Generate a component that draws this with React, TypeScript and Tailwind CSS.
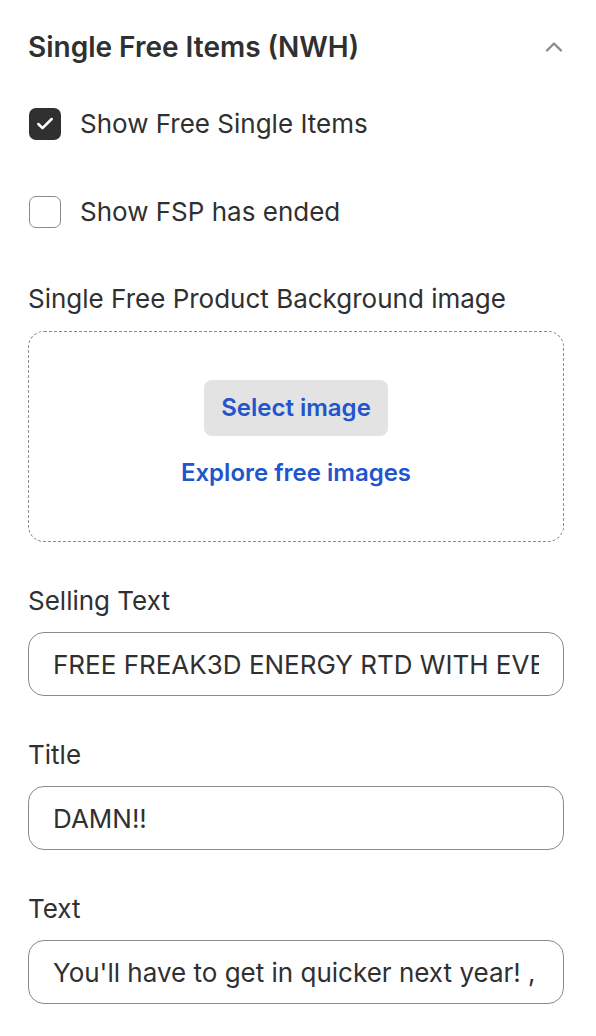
import { ChevronUp, Check } from 'lucide-react'

function Field({ label, value }: { label: string; value: string }) {
  return (
    <div className="flex flex-col gap-[15px]">
      <label className="text-[26px] leading-[32px] text-[#303030]">{label}</label>
      <div className="h-16 rounded-2xl border border-[#8a8a8a] px-6 flex items-center">
        <div className="flex-1 overflow-hidden">
          <span className="whitespace-nowrap text-[26px] text-[#303030]">{value}</span>
        </div>
      </div>
    </div>
  )
}

export default function App() {
  return (
    <div className="w-[596px] min-h-[1036px] bg-white font-['Inter',sans-serif] pl-7 pr-8 pt-[27px]">
      <div className="flex items-center justify-between">
        <h2 className="text-[28px] leading-[40px] font-semibold text-[#303030]">Single Free Items (NWH)</h2>
        <ChevronUp className="w-7 h-7 text-[#8a8a8a] -mr-1" strokeWidth={2} />
      </div>

      <div className="mt-[41px] flex items-center gap-[19px] pl-px">
        <div className="w-8 h-8 rounded-[7px] bg-[#303030] flex items-center justify-center">
          <Check className="w-5 h-5 text-white" strokeWidth={3} />
        </div>
        <span className="text-[26px] leading-8 text-[#303030]">Show Free Single Items</span>
      </div>

      <div className="mt-[56px] flex items-center gap-[19px] pl-px">
        <div className="w-8 h-8 rounded-[7px] border border-[#8a8a8a] bg-white" />
        <span className="text-[26px] leading-8 text-[#303030]">Show FSP has ended</span>
      </div>

      <div className="mt-[55px] flex flex-col gap-[16px]">
        <label className="text-[26px] leading-[32px] text-[#303030]">Single Free Product Background image</label>
        <div className="h-[211px] rounded-2xl border border-dashed border-[#8a8a8a] flex flex-col items-center pt-[48px] gap-[21px]">
          <button className="h-14 px-[17px] rounded-lg bg-[#e3e3e3] text-[24px] font-semibold text-[#2155cd]">
            Select image
          </button>
          <span className="text-[24px] leading-[32px] font-semibold text-[#2155cd]">Explore free images</span>
        </div>
      </div>

      <div className="mt-[43px] flex flex-col gap-[43px]">
        <Field label="Selling Text" value="FREE FREAK3D ENERGY RTD WITH EVERY ORDER" />
        <Field label="Title" value="DAMN!!" />
        <Field label="Text" value="You'll have to get in quicker next year! , ' ' ,," />
      </div>
    </div>
  )
}
